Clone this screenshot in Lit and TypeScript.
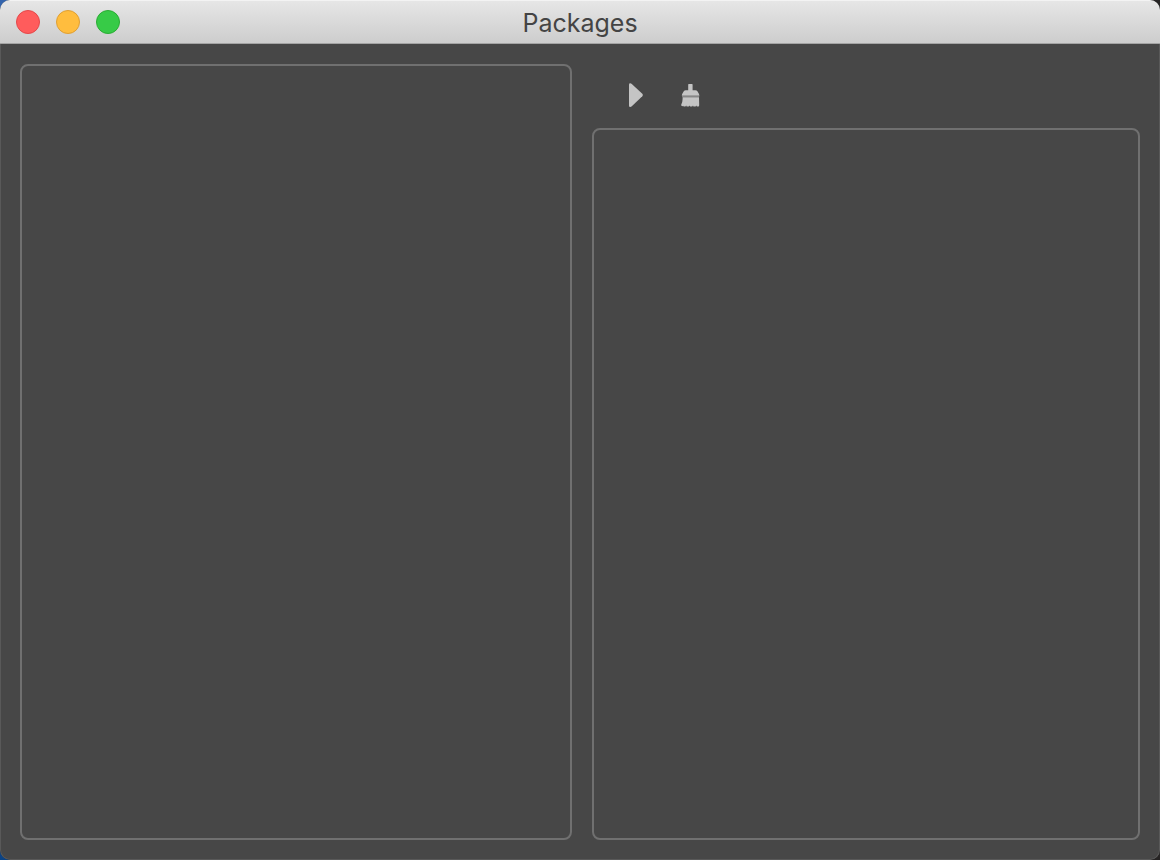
import { LitElement, html, css } from "lit";
import { customElement } from "lit/decorators.js";

@customElement("app-root")
export class AppRoot extends LitElement {
  static styles = css`
    :host {
      display: block;
      height: 100vh;
      background:
        linear-gradient(to right, transparent, #262424 50%),
        linear-gradient(#3565ad, #0b4384);
      font-family: Inter, Roboto, "Liberation Sans", sans-serif;
    }
    * {
      box-sizing: border-box;
    }
    .window {
      height: 100%;
      display: flex;
      flex-direction: column;
      border-radius: 10px;
      overflow: hidden;
      background: #474747;
    }
    .titlebar {
      flex: none;
      display: grid;
      grid-template-columns: 1fr auto 1fr;
      align-items: center;
      height: 44px;
      padding: 0 16px;
      background: linear-gradient(#e6e6e6, #cdcdcd);
      border-top: 1px solid #f3f3f3;
      border-bottom: 1px solid #a4a4a4;
    }
    .lights {
      display: flex;
      gap: 16px;
    }
    .light {
      width: 24px;
      height: 24px;
      padding: 0;
      border: 1px solid;
      border-radius: 50%;
    }
    .close {
      background: #ff5c5c;
      border-color: #e4484a;
    }
    .minimize {
      background: #ffbd3e;
      border-color: #df9f33;
    }
    .zoom {
      background: #37cb47;
      border-color: #2bac34;
    }
    .title {
      margin: 0;
      padding-top: 2px;
      font-size: 25px;
      line-height: 32px;
      font-weight: 400;
      color: #444444;
    }
    .content {
      flex: 1;
      min-height: 0;
      display: grid;
      grid-template-columns: minmax(0, 138fr) minmax(0, 137fr);
      gap: 20px;
      padding: 20px 19px 19px;
      border: 1px solid #595959;
      border-top: 0;
      border-radius: 0 0 10px 10px;
    }
    .pane {
      border: 2px solid #707070;
      border-radius: 8px;
    }
    .column {
      display: flex;
      flex-direction: column;
      min-height: 0;
    }
    .column .pane {
      flex: 1;
    }
    .toolbar {
      display: flex;
      align-items: center;
      gap: 26px;
      height: 64px;
      padding: 0 30px 2px;
    }
    .tool {
      width: 28px;
      height: 28px;
      padding: 0;
      border: 0;
      background: none;
      color: #c4c4c4;
    }
    .tool svg {
      display: block;
      fill: currentColor;
    }
  `;

  render() {
    return html`
      <div class="window">
        <header class="titlebar">
          <div class="lights">
            <button class="light close" aria-label="Close"></button>
            <button class="light minimize" aria-label="Minimize"></button>
            <button class="light zoom" aria-label="Zoom"></button>
          </div>
          <h1 class="title">Packages</h1>
        </header>
        <main class="content">
          <section class="pane" aria-label="Package list"></section>
          <div class="column">
            <div class="toolbar" role="toolbar">
              <button class="tool" aria-label="Run">
                <svg width="28" height="28" viewBox="0 0 28 28">
                  <path d="M7 3.4Q7 2.2 8.2 2.2Q9 2.2 9.8 2.9L20.3 12.7Q21.6 14 20.3 15.3L9.8 25.3Q9 26 8.2 26Q7 26 7 24.8Z" />
                </svg>
              </button>
              <button class="tool" aria-label="Clear">
                <svg width="28" height="28" viewBox="0 0 28 28">
                  <path d="M12.2 3.6Q12.2 3 12.8 3H16Q16.6 3 16.6 3.6V9.2H19.2Q20.8 9.2 21.6 10.6Q23 12.6 23.4 14.8H5.8Q6.2 12.6 7.6 10.6Q8.4 9.2 9.8 9.2H12.2Z" />
                  <rect x="6" y="14.8" width="17.2" height="1.4" fill="#868686" />
                  <path d="M6.6 16.2H23L23.2 24.2Q23.2 25.4 22.2 25.4H20.8L20.4 24.6L19.6 25.4H17.4L17 24.6L16.2 25.4H14L13.6 24.6L12.8 25.4H10.6L10.2 24.6L9.4 25.4H7.6L7.2 24.7L6.6 25.2Q4.8 25 5.2 23.8Q6.6 21 6.6 18Z" />
                </svg>
              </button>
            </div>
            <section class="pane" aria-label="Output"></section>
          </div>
        </main>
      </div>
    `;
  }
}
